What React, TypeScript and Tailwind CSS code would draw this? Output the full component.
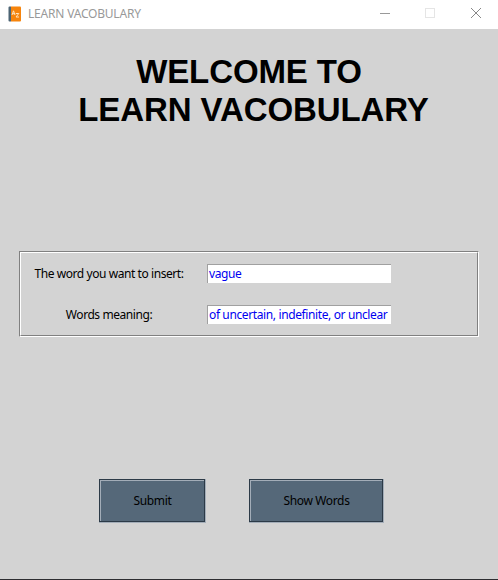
import React from "react";

function BookIcon() {
  return (
    <svg width="14" height="16" viewBox="0 0 14 16" className="shrink-0">
      <path d="M1.5 0.5H3v15H1.5A1 1 0 0 1 .5 14.500V1.500a1 1 0 0 1 1-1Z" fill="#4d6474" />
      <path d="M3 .5h9a1 1 0 0 1 1 1v13a1 1 0 0 1-1 1H3Z" fill="#f6840c" />
      <path d="M4 9 5.500 4.800 7 9M4.500 7.700h2M7.800 7.500h3L8 11h3" fill="none" stroke="#ffe3bd" strokeWidth="1" />
    </svg>
  );
}

function TitleBar() {
  return (
    <header className="flex h-[29px] items-center bg-white pl-[8px] pb-[2px]">
      <BookIcon />
      <span className="ml-[6px] flex-1 whitespace-nowrap text-[12px] leading-4 tracking-[-0.2px] text-[#999]">
        LEARN VACOBULARY
      </span>
      <svg width="118" height="27" viewBox="0 0 118 27" shapeRendering="crispEdges">
        <path d="M0 13.500h10" stroke="#999" />
        <rect x="45.500" y="8.500" width="9" height="9" fill="none" stroke="#e5e5e5" />
        <path d="m91 8 10 10m0-10L91 18" stroke="#888" shapeRendering="auto" />
      </svg>
    </header>
  );
}

function Field({ label, value }: { label: string; value: string }) {
  return (
    <div className="flex h-[19px] items-center">
      <label className="w-[176px] whitespace-nowrap text-center text-[12px] leading-4 tracking-[-0.43px] text-black">
        {label}
      </label>
      <div className="ml-[10px] h-[19px] w-[184px] overflow-hidden whitespace-nowrap border-l border-t border-[#a0a0a0] bg-white pl-[1px] text-[12px] leading-[18px] tracking-[-0.38px] text-[#0000f0]">
        {value}
      </div>
    </div>
  );
}

function PushButton({ text, width }: { text: string; width: string }) {
  return (
    <button className={"h-[44px] border-b border-r border-[#a3adb8] " + width}>
      <span className="block h-full border border-[#2c3a47] bg-[#556879]">
        <span className="flex h-full items-center justify-center border-l border-t border-[#a3adb8] text-[12px] leading-4 tracking-[-0.35px] text-black">
          {text}
        </span>
      </span>
    </button>
  );
}

export default function App() {
  return (
    <div className="flex h-[580px] w-[498px] flex-col overflow-hidden border-b border-[#2d2d30] bg-[#d3d3d3] font-['Noto_Sans',sans-serif]">
      <TitleBar />
      <h1 className="mt-[24px] pl-[9px] text-center font-['Liberation_Sans',sans-serif] text-[33px] font-bold leading-[38px] tracking-[-0.1px] text-black">
        <span className="block pr-[9px]">WELCOME TO</span>
        <span className="block">LEARN VACOBULARY</span>
      </h1>
      <section className="ml-[19px] mt-[122px] h-[86px] w-[460px] border border-b-white border-l-[#808080] border-r-white border-t-[#808080]">
        <div className="flex h-full flex-col gap-[22px] border border-b-[#808080] border-l-white border-r-[#808080] border-t-white pt-[11px]">
          <Field label="The word you want to insert:" value="vague" />
          <Field label="Words meaning:" value="of uncertain, indefinite, or unclear" />
        </div>
      </section>
      <div className="ml-[99px] mt-[142px] flex gap-[43px]">
        <PushButton text="Submit" width="w-[107px]" />
        <PushButton text="Show Words" width="w-[135px]" />
      </div>
    </div>
  );
}
